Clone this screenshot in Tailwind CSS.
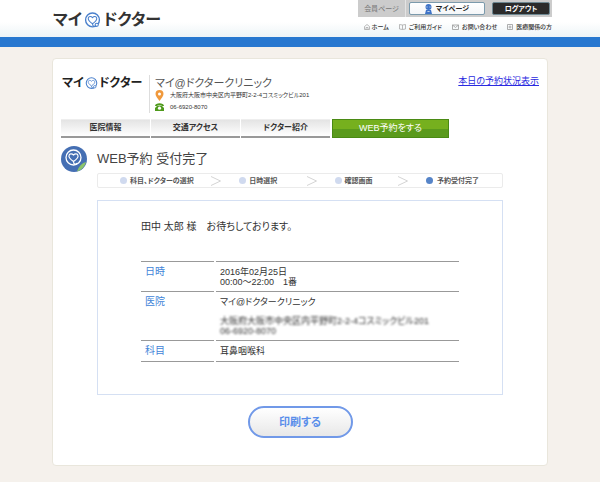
<!DOCTYPE html>
<html lang="ja">
<head>
    <meta charset="UTF-8">
    <meta name="viewport" content="width=device-width, initial-scale=1.0">
    <script src="https://cdn.jsdelivr.net/npm/@tailwindcss/browser@4"></script>
    <title>WEB予約 受付完了 | マイドクター</title>
    <style>
        body {
            font-family: 'Liberation Sans', 'Noto Sans CJK JP', sans-serif;
            font-feature-settings: 'palt';
        }
    </style>
</head>
<body class="min-h-screen bg-[#f5f1ec] text-[#333]">
    <!-- Shared symbols -->
    <svg class="hidden">
        <symbol id="mark" viewBox="0 0 32 32">
            <circle cx="16" cy="15" r="13" fill="none" stroke="currentColor" stroke-width="2.6"/>
            <path d="M16 22C10 18 7.500 14.500 8 11.500C8.500 8 13 7 16 10.500C19 7 23.500 8 24 11.500C24.500 14.500 22 18 16 22Z" fill="none" stroke="currentColor" stroke-width="2"/>
            <path d="M16 22C16 28 22 29 23 25" fill="none" stroke="currentColor" stroke-width="2"/>
            <circle cx="24" cy="24" r="3" fill="#fff" stroke="currentColor" stroke-width="2"/>
        </symbol>
        <symbol id="chevron" viewBox="0 0 10 10">
            <path d="M0 0.500L9.500 5L0 9.500" fill="none" stroke="#d4d4d4"/>
        </symbol>
    </svg>

    <!-- Header -->
    <header class="border-b-10 border-[#2878d0] bg-linear-to-b from-white from-60% to-[#edf4f7]">
        <div class="mx-auto flex h-[37px] w-full max-w-[504px] justify-between pl-[5px]">
            <a href="#" class="mt-[10px] flex h-5 items-center text-[16px] leading-5 font-bold text-[#333]">
                マイ<svg class="mx-[2px] size-[17px] text-[#4a80cc]"><use href="#mark"/></svg>ドクター
            </a>
            <div class="flex flex-col items-end">
                <div class="flex h-[17px] w-[194px] items-center bg-[#ccc] text-[7px] leading-3">
                    <span class="flex h-full w-[48px] items-center justify-center border-r border-[#e4e4e4] text-[#777]">会員ページ</span>
                    <button class="ml-[3px] flex h-[13px] w-[76px] items-center justify-center gap-1 rounded-xs border border-[#7b9aac] bg-linear-to-b from-white to-[#f4f6f8] font-bold text-[#222]">
                        <svg class="h-[10px] w-[7px]" viewBox="0 0 7 10">
                            <circle cx="3.500" cy="3" r="3" fill="#3f74c8"/>
                            <path d="M1 6H6L7 10H0Z" fill="#3f74c8"/>
                            <path d="M1.500 3H2.500M4.500 3H5.500M2.500 7L3.500 8L4.500 7" stroke="#fff" stroke-width="0.800" fill="none"/>
                        </svg>
                        マイページ
                    </button>
                    <button class="ml-[7px] flex h-[13px] w-[58px] items-center justify-center rounded-xs border border-[#6d8791] bg-[#2b2b2b] font-bold text-white">ログアウト</button>
                </div>
                <nav class="mt-1 flex h-3 items-center gap-[10px] text-[6px] leading-3 font-medium text-[#333]">
                    <a href="#" class="flex items-center gap-[2px]">
                        <svg class="size-[6px]" viewBox="0 0 6 6"><path d="M0.500 5.500V2.500L3 0.500L5.500 2.500V5.500ZM2 5.500V3.500H4V5.500" fill="none" stroke="#aaa" stroke-width="0.800"/></svg>
                        ホーム
                    </a>
                    <a href="#" class="flex items-center gap-[3px]">
                        <svg class="h-[6px] w-[7px]" viewBox="0 0 7 6"><path d="M3.500 1L0.500 0.500V5L3.500 5.500L6.500 5V0.500L3.500 1V5.500" fill="none" stroke="#aaa" stroke-width="0.800"/></svg>
                        ご利用ガイド
                    </a>
                    <a href="#" class="flex items-center gap-[3px]">
                        <svg class="h-[6px] w-[7px]" viewBox="0 0 7 6"><path d="M0.500 1H6.500V5.500H0.500ZM0.500 1L3.500 3.500L6.500 1" fill="none" stroke="#999" stroke-width="0.800"/></svg>
                        お問い合わせ
                    </a>
                    <a href="#" class="flex items-center gap-[3px]">
                        <svg class="size-[6px]" viewBox="0 0 6 6"><path d="M0.500 0.500H5.500V5.500H0.500ZM3 1.500V4.500M1.500 3H4.500" fill="none" stroke="#999" stroke-width="0.800"/></svg>
                        医療関係の方
                    </a>
                </nav>
            </div>
        </div>
    </header>

    <!-- Main Content -->
    <main class="mx-auto mt-[11px] mb-4 w-full max-w-[496px] rounded border border-[#e9e6dc] bg-white px-2 pb-[27px]">
        <!-- Clinic -->
        <div class="flex items-start justify-between pt-4">
            <div class="flex">
                <a href="#" class="flex h-4 w-[88px] items-center pl-px text-[12px] leading-4 font-bold text-[#222]">
                    マイ<svg class="mx-px size-[13px] text-[#4a80cc]"><use href="#mark"/></svg>ドクター
                </a>
                <div class="border-l border-[#ddd] pl-[5px]">
                    <h2 class="pt-[2px] text-[11px] leading-3 text-[#555]">マイ@ドクタークリニック</h2>
                    <p class="flex h-3 items-center gap-[6px] text-[6px] leading-3">
                        <svg class="h-[11px] w-[9px]" viewBox="0 0 9 11"><path d="M4.500 11C2.500 8 0.500 6 0.500 4A4 4 0 0 1 8.500 4C8.500 6 6.500 8 4.500 11Z" fill="#f0993c"/><circle cx="4.500" cy="4" r="1.500" fill="#fff"/></svg>
                        大阪府大阪市中央区内平野町2-2-4コスミックビル201
                    </p>
                    <p class="flex h-3 items-center gap-[6px] text-[6px] leading-3">
                        <svg class="h-[8px] w-[9px]" viewBox="0 0 9 8"><path d="M0 3C0 -0.700 9 -0.700 9 3H6.500V2H2.500V3Z" fill="#4f9a1c"/><path d="M2.500 2.500H6.500L9 5V8H0V5Z" fill="#4f9a1c"/><circle cx="4.500" cy="5.200" r="1.600" fill="#fff"/></svg>
                        06-6920-8070
                    </p>
                </div>
            </div>
            <a href="#" class="text-[9px] leading-3 text-[#2a2ae0] underline">本日の予約状況表示</a>
        </div>

        <!-- Tabs -->
        <nav class="mt-[6px] flex h-[19px] gap-px text-[8px] font-bold">
            <a href="#" class="flex w-[89px] items-center justify-center border-t border-b-2 border-t-[#eee] border-b-[#999] bg-linear-to-b from-[#e4e4e4] to-white">医院情報</a>
            <a href="#" class="flex w-[89px] items-center justify-center border-t border-b-2 border-t-[#eee] border-b-[#999] bg-linear-to-b from-[#e4e4e4] to-white">交通アクセス</a>
            <a href="#" class="flex w-[89px] items-center justify-center border-t border-b-2 border-t-[#eee] border-b-[#999] bg-linear-to-b from-[#e4e4e4] to-white">ドクター紹介</a>
            <a href="#" class="ml-px flex w-[117px] items-center justify-center border border-[#4a8a14] bg-linear-to-b from-[#76b01e] from-50% to-[#5a9a1c] to-50% text-[9px] font-normal text-white">WEB予約をする</a>
        </nav>

        <!-- Title -->
        <div class="mt-[7px] flex h-[27px] items-center gap-[10px]">
            <svg class="size-[26px]" viewBox="0 0 26 26">
                <circle cx="13" cy="13" r="13" fill="#456fb3"/>
                <path d="M25 16Q19 17 16 25.500Q23 23.500 25 16Z" fill="#8cc46a"/>
                <circle cx="12.500" cy="11.500" r="7.500" fill="none" stroke="#fff" stroke-width="1.300"/>
                <path d="M12.500 15.500C9 13 7.500 11 8 9.500C8.500 7.500 11 7.500 12.500 9C14 7.500 16.500 7.500 17 9.500C17.500 11 16 13 12.500 15.500C12.500 18.500 15 19 16 17" fill="none" stroke="#fff" stroke-width="1.200"/>
            </svg>
            <h1 class="text-[13px] leading-4 text-[#444]">WEB予約 受付完了</h1>
        </div>

        <div class="mr-9 ml-9">
            <!-- Steps -->
            <ol class="mt-px flex h-[15px] items-center justify-between rounded-xs border border-[#ebebeb] pr-[23px] pl-[22px] text-[7px] leading-3 font-bold text-[#555]">
                <li class="flex items-center gap-[3px]"><span class="size-[7px] rounded-full bg-[#d0daef]"></span>科目、ドクターの選択</li>
                <li aria-hidden="true"><svg class="size-[10px]"><use href="#chevron"/></svg></li>
                <li class="flex items-center gap-[3px]"><span class="size-[7px] rounded-full bg-[#d0daef]"></span>日時選択</li>
                <li aria-hidden="true" class="ml-3"><svg class="size-[10px]"><use href="#chevron"/></svg></li>
                <li class="flex items-center gap-[3px]"><span class="size-[7px] rounded-full bg-[#d0daef]"></span>確認画面</li>
                <li aria-hidden="true" class="ml-2"><svg class="size-[10px]"><use href="#chevron"/></svg></li>
                <li class="flex items-center gap-[4px]"><span class="size-[7px] rounded-full bg-[#5684c8]"></span>予約受付完了</li>
            </ol>

            <!-- Reservation -->
            <section class="mt-3 border border-[#d5e0f3] px-[41px] pt-5 pb-8">
                <p class="pl-[2px] text-[10px] leading-3">田中 太郎 様　お待ちしております。</p>
                <table class="mt-7 w-full border-separate border-spacing-x-[2px] border-spacing-y-0 text-left text-[9px] leading-[10px]">
                    <tbody class="align-top">
                        <tr class="h-[30px]">
                            <th class="w-[73px] border-t border-[#999] pt-[5px] pl-1 text-[10px] font-normal text-[#3f84d8]">日時</th>
                            <td class="border-t border-[#999] pt-[5px] pl-1">2016年02月25日<br>00:00～22:00　1番</td>
                        </tr>
                        <tr class="h-[49px]">
                            <th class="border-t border-[#999] pt-[5px] pl-1 text-[10px] font-normal text-[#3f84d8]">医院</th>
                            <td class="border-t border-[#999] pt-[5px] pl-1">
                                マイ@ドクタークリニック
                                <p class="mt-[9px] blur-[1px]">大阪府大阪市中央区内平野町2-2-4コスミックビル201<br>06-6920-8070</p>
                            </td>
                        </tr>
                        <tr class="h-[22px]">
                            <th class="border-t border-b border-[#999] pt-[5px] pl-1 text-[10px] font-normal text-[#3f84d8]">科目</th>
                            <td class="border-t border-b border-[#999] pt-[5px] pl-1">耳鼻咽喉科</td>
                        </tr>
                    </tbody>
                </table>
            </section>

            <button class="mx-auto mt-[11px] block h-8 w-[105px] rounded-full border-2 border-[#7199e8] bg-linear-to-b from-white to-[#e8e8e8] text-[11px] font-bold text-[#5a8eea]">印刷する</button>
        </div>
    </main>
</body>
</html>
